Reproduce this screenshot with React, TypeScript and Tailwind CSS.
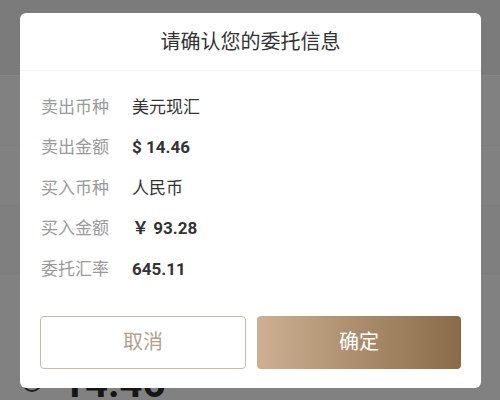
const rows = [
  { label: "卖出币种", value: "美元现汇", bold: false },
  { label: "卖出金额", value: "$ 14.46", bold: true },
  { label: "买入币种", value: "人民币", bold: false },
  { label: "买入金额", value: "￥ 93.28", bold: true },
  { label: "委托汇率", value: "645.11", bold: true },
];

const font = "font-['Roboto','Noto_Sans_CJK_SC',sans-serif]";

export default function App() {
  return (
    <div className={`relative h-[400px] w-[500px] overflow-hidden bg-[#818181] ${font}`}>
      {/* page behind the dim layer */}
      <div className="flex h-full flex-col">
        <div className="h-[76px] border-b border-[#858585] bg-[#7b7b7b]" />
        <div className="h-[70px] border-b border-[#7d7d7d]" />
        <div className="h-[60px] border-b border-[#7d7d7d]" />
        <div className="h-[68px] border-b border-[#7c7c7c] bg-[#7f7f7f]" />
        <div className="flex-1" />
        <div className="flex h-[22px] items-start gap-[20px] pl-[22px]">
          <div className="mt-[-6px] h-[20px] w-[20px] rounded-full border-2 border-[#1e1e1e]" />
          <span className="mt-[-14px] text-[40px] leading-none font-bold text-[#151515]">14.46</span>
        </div>
      </div>

      {/* dialog */}
      <div className="absolute left-[20px] top-[13px] flex h-[375px] w-[461px] flex-col rounded-[6px] bg-white">
        <div className="flex h-[58px] items-center justify-center border-b border-[#f3f3f3] text-[20px] text-[#333]">
          请确认您的委托信息
        </div>
        <div className="flex flex-col pt-[16px]">
          {rows.map((r) => (
            <div key={r.label} className="flex h-[40.5px] items-center pl-[21px] text-[17px]">
              <span className="w-[91px] text-[#9a9a9a]">{r.label}</span>
              <span className={r.bold ? "font-bold text-[#333]" : "text-[#333]"}>{r.value}</span>
            </div>
          ))}
        </div>
        <div className="mt-[26px] flex gap-[11px] px-[20px]">
          <button className="flex h-[53px] flex-1 items-center justify-center rounded-[4px] border border-[#c9b9a7] bg-white text-[20px] text-[#b39f88]">
            取消
          </button>
          <button className="flex h-[53px] flex-1 items-center justify-center rounded-[4px] bg-gradient-to-r from-[#cdb192] to-[#8a6b49] text-[20px] text-white">
            确定
          </button>
        </div>
      </div>
    </div>
  );
}
